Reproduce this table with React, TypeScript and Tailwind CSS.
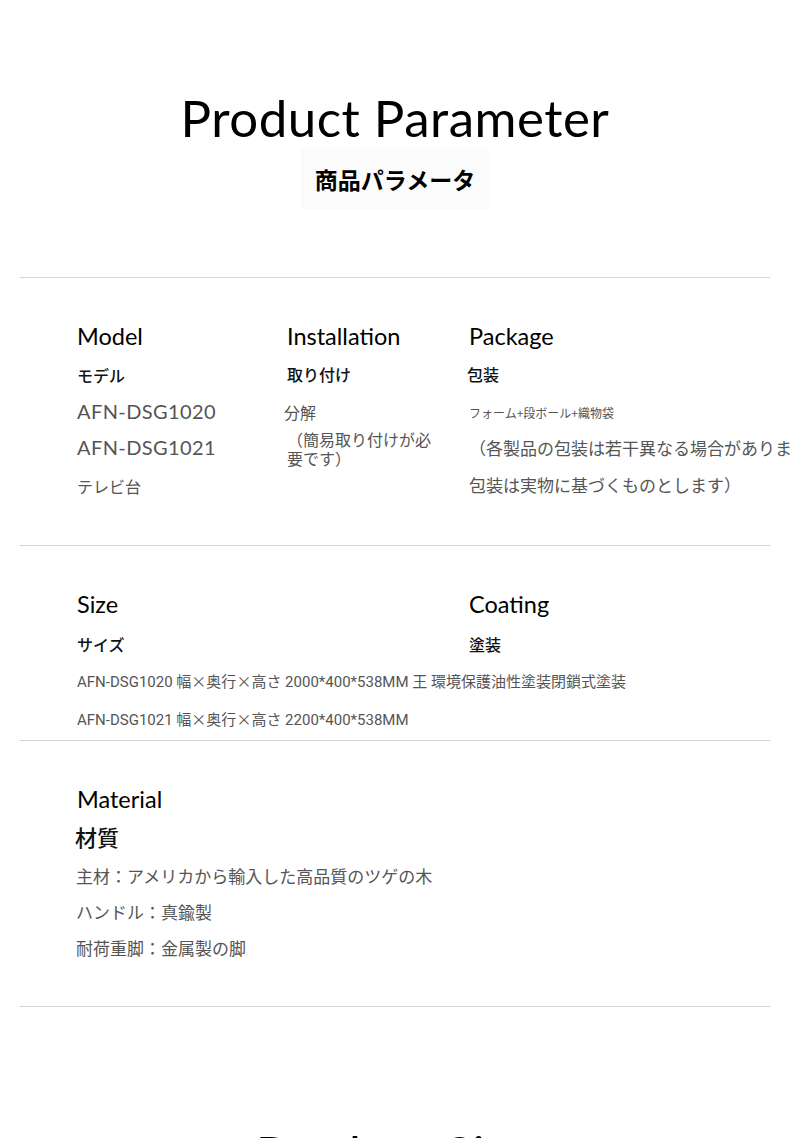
const jp = "font-['Noto_Sans_CJK_JP',sans-serif]";
const en = "font-['Lato','Noto_Sans_CJK_JP',sans-serif]";
const cond = "font-['Roboto','Noto_Sans_CJK_JP',sans-serif]";

function Divider() {
  return <div className="mx-[20px] h-px bg-[#d4d4d4]" />;
}

function Heading({ children }: { children: string }) {
  return <div className={`${en} text-[23.5px] leading-[28px] text-black`}>{children}</div>;
}

export default function App() {
  return (
    <div className="h-[1138px] w-[790px] overflow-hidden bg-white text-[#111]">
      {/* Title */}
      <div className="flex flex-col items-center pt-[88px]">
        <h1 className={`${en} text-[51px] leading-[60px] font-normal tracking-[0.5px] text-black`}>
          Product Parameter
        </h1>
        <div className="flex h-[62px] w-[188px] items-center justify-center bg-[#fbfbfb]">
          <span className={`${jp} text-[23px] leading-none font-bold text-black`}>商品パラメータ</span>
        </div>
      </div>

      <div className="mt-[67px]">
        <Divider />
      </div>

      {/* Model / Installation / Package */}
      <div className="flex h-[267px] pl-[77px] pt-[44px]">
        <div className="w-[210px] shrink-0">
          <Heading>Model</Heading>
          <div className={`${jp} mt-[13px] text-[16px] leading-[24px] font-medium`}>モデル</div>
          <div className={`${en} mt-[11px] text-[20px] leading-[26px] tracking-[0.4px] text-[#555]`}>AFN-DSG1020</div>
          <div className={`${en} mt-[10px] text-[20px] leading-[26px] tracking-[0.4px] text-[#555]`}>AFN-DSG1021</div>
          <div className={`${jp} mt-[14px] text-[16px] leading-[24px] text-[#555]`}>テレビ台</div>
        </div>
        <div className="w-[182px] shrink-0">
          <Heading>Installation</Heading>
          <div className={`${jp} mt-[12px] text-[16px] leading-[24px] font-medium`}>取り付け</div>
          <div className={`${jp} -ml-[3px] mt-[14px] text-[16px] leading-[24px] text-[#555]`}>分解</div>
          <div className={`${jp} mt-[6px] w-[158px] text-[16px] leading-[19px] text-[#555]`}>
            （簡易取り付けが必要です）
          </div>
        </div>
        <div className="min-w-0 flex-1 whitespace-nowrap">
          <Heading>Package</Heading>
          <div className={`${jp} -ml-[2px] mt-[12px] text-[16px] leading-[24px] font-medium`}>包装</div>
          <div className={`${jp} mt-[18px] text-[12px] leading-[18px] text-[#555]`}>フォーム+段ボール+織物袋</div>
          <div className={`${jp} mt-[14px] text-[17px] leading-[24px] text-[#555]`}>
            （各製品の包装は若干異なる場合がありますが、
          </div>
          <div className={`${jp} mt-[13px] text-[17px] leading-[24px] text-[#555]`}>包装は実物に基づくものとします）</div>
        </div>
      </div>

      <Divider />

      {/* Size / Coating */}
      <div className="h-[194px] pl-[77px] pt-[44px]">
        <div className="flex">
          <div className="w-[392px] shrink-0">
            <Heading>Size</Heading>
            <div className={`${jp} mt-[14px] text-[16px] leading-[24px] font-medium`}>サイズ</div>
          </div>
          <div>
            <Heading>Coating</Heading>
            <div className={`${jp} mt-[14px] text-[16px] leading-[24px] font-medium`}>塗装</div>
          </div>
        </div>
        <div className={`${cond} mt-[13px] text-[15px] leading-[24px] text-[#555]`}>
          AFN-DSG1020 幅<span className={jp}>×</span>奥行<span className={jp}>×</span>高さ 2000*400*538MM 王 環境保護油性塗装閉鎖式塗装
        </div>
        <div className={`${cond} mt-[13px] text-[15px] leading-[24px] text-[#555]`}>
          AFN-DSG1021 幅<span className={jp}>×</span>奥行<span className={jp}>×</span>高さ 2200*400*538MM
        </div>
      </div>

      <Divider />

      {/* Material */}
      <div className="h-[265px] pl-[77px] pt-[44px]">
        <Heading>Material</Heading>
        <div className={`${jp} -ml-[2px] mt-[7px] text-[22px] leading-[32px] font-medium`}>材質</div>
        <div className={`${jp} -ml-[1px] mt-[12px] text-[17px] leading-[24px] text-[#555]`}>
          主材：アメリカから輸入した高品質のツゲの木
        </div>
        <div className={`${jp} -ml-[1px] mt-[12px] text-[17px] leading-[24px] text-[#555]`}>ハンドル：真鍮製</div>
        <div className={`${jp} -ml-[1px] mt-[12px] text-[17px] leading-[24px] text-[#555]`}>耐荷重脚：金属製の脚</div>
      </div>

      <Divider />

      {/* Next section heading, cut off by the frame */}
      <div className="flex justify-center pt-[117px]">
        <h2 className={`${en} text-[51px] leading-[60px] text-black`}>Product Size</h2>
      </div>
    </div>
  );
}
